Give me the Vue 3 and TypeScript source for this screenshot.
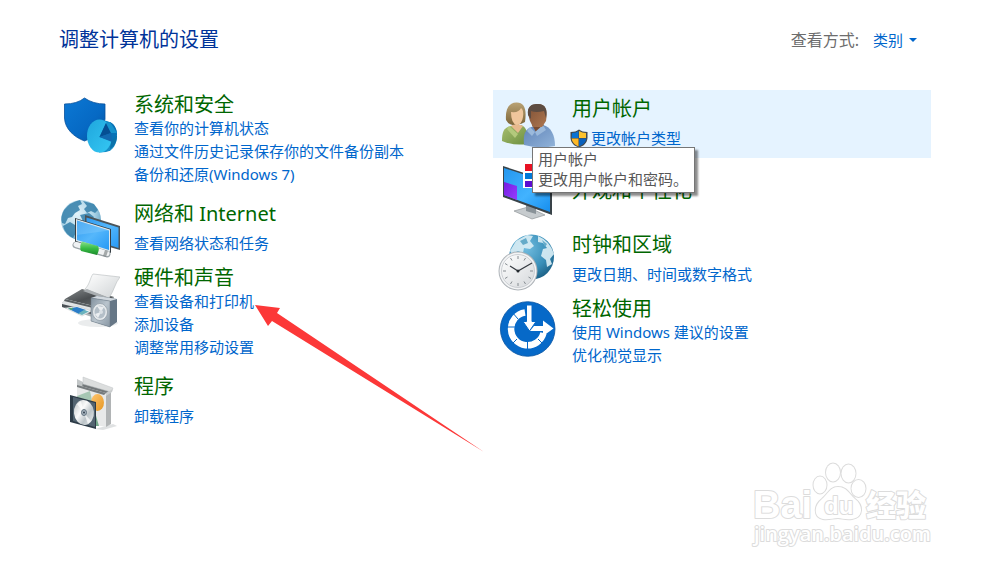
<script setup lang="ts">
interface Category {
  id: string
  title: string
  links: string[]
}

const systemCategories: Category[] = [
  { id: 'security', title: '系统和安全', links: ['查看你的计算机状态', '通过文件历史记录保存你的文件备份副本', '备份和还原(Windows 7)'] },
  { id: 'network', title: '网络和 Internet', links: ['查看网络状态和任务'] },
  { id: 'hardware', title: '硬件和声音', links: ['查看设备和打印机', '添加设备', '调整常用移动设置'] },
  { id: 'programs', title: '程序', links: ['卸载程序'] },
]

const personalCategories: Category[] = [
  { id: 'accounts', title: '用户帐户', links: ['更改帐户类型'] },
  { id: 'appearance', title: '外观和个性化', links: [] },
  { id: 'clock', title: '时钟和区域', links: ['更改日期、时间或数字格式'] },
  { id: 'access', title: '轻松使用', links: ['使用 Windows 建议的设置', '优化视觉显示'] },
]

const columns = [systemCategories, personalCategories]
</script>

<template>
  <main class="panel">
    <header class="bar">
      <h1 class="title">调整计算机的设置</h1>
      <div class="view">
        <span id="view-label" class="view-label">查看方式:</span>
        <button class="view-button" type="button" aria-labelledby="view-label view-value">
          <span id="view-value">类别</span>
          <svg class="caret" viewBox="0 0 8 4" aria-hidden="true"><path d="M0 0H8L4 4Z" fill="#0066cc" /></svg>
        </button>
      </div>
    </header>

    <div class="columns">
      <div v-for="(column, index) in columns" :key="index" class="column">
        <section v-for="item in column" :key="item.id" class="item" :class="[item.id, { single: item.links.length === 1 }]">
          <svg v-if="item.id === 'security'" class="icon" viewBox="0 0 60 60" aria-hidden="true">
            <defs>
              <linearGradient id="sec-shield" x1="0" y1="0" x2="1" y2="1"><stop offset="0" stop-color="#0b78d4" /><stop offset=".6" stop-color="#0669c4" /><stop offset="1" stop-color="#07509b" /></linearGradient>
              <linearGradient id="sec-disc" x1="0" y1="0" x2="1" y2="1"><stop offset="0" stop-color="#1fa6dd" /><stop offset="1" stop-color="#35c8f3" /></linearGradient>
            </defs>
            <path d="M4.500 8Q17 8 24.500 2Q33 8 45 8V23C44 34 35 41 24.500 45C14 41 5 33 4.500 22Z" fill="url(#sec-shield)" stroke="#07519c" stroke-width=".8" />
            <path d="M40 24L47 25C54 27 57 33 57 39C57 48 53 55 46 56L39 56.500Z" fill="#168dc6" />
            <path d="M50 53C55 50 57 45 57 40L52 38Z" fill="#0b72aa" />
            <ellipse cx="39.500" cy="40" rx="12.500" ry="16.500" fill="url(#sec-disc)" />
            <path d="M39.500 41L46 27L50 26C55 28 57 34 57 39L52 45Z" fill="#0872b6" />
            <path d="M39.500 41L46 27L51 37Z" fill="#054f93" />
            <path d="M39.500 41L51 37L52 46Z" fill="#1269b0" />
            <path d="M46 27L50 26L57 37L51 37Z" fill="#1593cd" />
          </svg>

          <svg v-else-if="item.id === 'network'" class="icon" viewBox="0 0 60 60" aria-hidden="true">
            <defs>
              <radialGradient id="net-globe" cx=".4" cy=".35" r=".7"><stop offset="0" stop-color="#e4f4fa" /><stop offset=".6" stop-color="#aed5e7" /><stop offset="1" stop-color="#5c9fc2" /></radialGradient>
              <linearGradient id="net-screen" x1="0" y1="0" x2="1" y2="1"><stop offset="0" stop-color="#2f9af0" /><stop offset=".5" stop-color="#55b7fb" /><stop offset="1" stop-color="#2699f5" /></linearGradient>
              <linearGradient id="net-green" x1="0" y1="0" x2="0" y2="1"><stop offset="0" stop-color="#8be08b" /><stop offset=".5" stop-color="#39bd46" /><stop offset="1" stop-color="#1c8b2b" /></linearGradient>
            </defs>
            <circle cx="21" cy="20" r="20" fill="url(#net-globe)" />
            <path d="M4 10Q10 2 20 0L22 4L18 6L20 10L15 13L12 17L8 18L5 24L2 23Q0 17 4 10ZM23 1L34 4L38 10L35 13L31 11L27 13L24 9L27 6ZM3 26L10 22L15 25L17 31L13 38Q5 34 3 26ZM20 15L29 13L34 17L30 24L23 21Z" fill="#347fa9" opacity=".85" />
            <path d="M25 15L60 26V50L25 40Z" fill="#4b5459" />
            <path d="M26.500 17.500L58.500 27.500V48L26.500 38Z" fill="url(#net-screen)" />
            <path d="M15 18L51 29V53L15 42Z" fill="#353e43" />
            <path d="M16 19L50 29.500V52L16 41Z" fill="#dfe7eb" />
            <path d="M17 20.500L49 30.500V50L17 40Z" fill="url(#net-screen)" />
            <path d="M17 20.500L49 30.500L17 35Z" fill="#8ccefc" opacity=".35" />
            <path d="M16 45L47 54" stroke="#9ca4a8" stroke-width="7" stroke-linecap="round" />
            <path d="M16 44.500L47 53.500" stroke="#f0f2f3" stroke-width="5" stroke-linecap="round" />
            <path d="M22 41.500L38 46Q40 49 37 55L21 51Q19 46 22 41.500Z" fill="url(#net-green)" />
            <path d="M45 50L48 51L46 57L43 56Z" fill="#73797b" opacity=".6" />
          </svg>

          <svg v-else-if="item.id === 'hardware'" class="icon" viewBox="0 0 60 60" aria-hidden="true">
            <defs>
              <linearGradient id="hw-paper" x1="0" y1="0" x2="1" y2="1"><stop offset="0" stop-color="#ffffff" /><stop offset="1" stop-color="#cfd3d5" /></linearGradient>
              <linearGradient id="hw-top" x1="0" y1="0" x2="1" y2="1"><stop offset="0" stop-color="#85898b" /><stop offset=".5" stop-color="#4b4f52" /><stop offset="1" stop-color="#6a6f72" /></linearGradient>
              <linearGradient id="hw-box" x1="0" y1="0" x2="1" y2="1"><stop offset="0" stop-color="#8493a0" /><stop offset=".5" stop-color="#b9c4cd" /><stop offset="1" stop-color="#8796a3" /></linearGradient>
            </defs>
            <ellipse cx="38" cy="54" rx="20" ry="4" fill="#adb3b6" opacity=".25" />
            <path d="M22 21L54 28V42L32 48L2 38V34L6 30Z" fill="#aeb4b7" />
            <path d="M22 20L54 28L34 37L5 30Z" fill="url(#hw-top)" />
            <path d="M25 20C30 15 30 9 33 5L60 8C55 14 54 22 49 29Z" fill="url(#hw-paper)" stroke="#b7bcbe" stroke-width=".6" />
            <path d="M27 20L49 29L45 30L23 22Z" fill="#a9aeb1" />
            <path d="M5 30L33 37V43L2 37V34Z" fill="#e1e4e5" />
            <path d="M5 30L33 37V39L4 32Z" fill="#5a6063" />
            <path d="M2 35L31 42V45L2 38Z" fill="#495055" />
            <path d="M5 39L17 37L32 42L22 47Z" fill="#f3f4f4" stroke="#b1b8bc" stroke-width=".4" />
            <path d="M8 39.500L17 38L26 41L19 45Z" fill="#2a7dc7" />
            <path d="M8 39.500L13 38.700L12 41Z" fill="#57ac69" />
            <path d="M18 44.500L24 41L29 42.500L22 46Z" fill="#6cb3bd" />
            <path d="M31 29L37 27L57 30V53L50 58L31 52Z" fill="#667786" />
            <path d="M31 29L37 27L57 30L50 32Z" fill="#d2d9df" />
            <path d="M31 29L50 32V58L31 52Z" fill="url(#hw-box)" stroke="#6c7a87" stroke-width=".5" />
            <ellipse cx="40" cy="43" rx="7.500" ry="8.500" fill="#e6eaed" stroke="#8c98a2" stroke-width=".7" />
            <ellipse cx="40" cy="43" rx="5.500" ry="6.500" fill="#b4bfc8" />
            <path d="M37 37L41 43L44 38ZM35 45L41 43L38 49Z" fill="#f9fafb" opacity=".8" />
            <circle cx="41" cy="43" r="2" fill="#dbe1e5" />
          </svg>

          <svg v-else-if="item.id === 'programs'" class="icon" viewBox="0 0 60 60" aria-hidden="true">
            <defs>
              <linearGradient id="prog-disc" x1="0" y1="0" x2="1" y2="1"><stop offset="0" stop-color="#b7bdc0" /><stop offset=".4" stop-color="#fafafa" /><stop offset=".65" stop-color="#bcc4c8" /><stop offset="1" stop-color="#f0f2f3" /></linearGradient>
              <linearGradient id="prog-orange" x1="0" y1="0" x2="1" y2="1"><stop offset="0" stop-color="#ffc56f" /><stop offset="1" stop-color="#e69722" /></linearGradient>
            </defs>
            <path d="M35 56L53 51L57 53L43 57Z" fill="#b7bdbf" opacity=".45" />
            <path d="M17 12L47 19V54L17 49Z" fill="#e8e9e9" />
            <path d="M46 19L51 16V51L46 54Z" fill="#b1b4b5" />
            <path d="M17 12L23 9L51 16L46 20Z" fill="#73787a" />
            <path d="M23 4L53 15L51 19L23 11Z" fill="#dcdede" stroke="#bec2c4" stroke-width=".5" />
            <path d="M17 6L23 9L22 15L17 12Z" fill="#c2c6c7" />
            <path d="M17 12L46 20L44 22L17 14Z" fill="#777c7e" />
            <path d="M46 20L53 16L52 19L46 23Z" fill="#c9cccd" />
            <path d="M17 23L30 18L33 32L18 27Z" fill="#a6c6b3" />
            <path d="M34 36L39 53L34 53Z" fill="#75a98b" />
            <ellipse cx="37.500" cy="29.500" rx="6.500" ry="8.500" fill="url(#prog-orange)" />
            <path d="M10 22L36 29V56L10 49Z" fill="#2d3b47" />
            <path d="M13 24L35 30V54L13 48Z" fill="#536471" />
            <ellipse cx="24" cy="39.500" rx="10" ry="12.500" fill="url(#prog-disc)" transform="rotate(-6 24 40)" />
            <path d="M24 40L17 31L21 28ZM24 40L31 48L28 51Z" fill="#ffffff" opacity=".7" />
            <ellipse cx="24" cy="39.500" rx="2.500" ry="3" fill="#a8b4be" stroke="#60717e" />
            <circle cx="24" cy="39.500" r="1" fill="#31404d" />
          </svg>

          <svg v-else-if="item.id === 'accounts'" class="icon" viewBox="0 0 60 60" aria-hidden="true">
            <defs>
              <linearGradient id="acc-green" x1="0" y1="0" x2="1" y2="1"><stop offset="0" stop-color="#a9bf70" /><stop offset="1" stop-color="#6c8f40" /></linearGradient>
              <linearGradient id="acc-blue" x1="0" y1="0" x2="1" y2="1"><stop offset="0" stop-color="#5f83b8" /><stop offset="1" stop-color="#91b3d9" /></linearGradient>
              <linearGradient id="acc-hair" x1="0" y1="0" x2="0" y2="1"><stop offset="0" stop-color="#b9a275" /><stop offset="1" stop-color="#7c6539" /></linearGradient>
              <linearGradient id="acc-face" x1="0" y1="0" x2="1" y2="1"><stop offset="0" stop-color="#7e5035" /><stop offset="1" stop-color="#ad7650" /></linearGradient>
            </defs>
            <path d="M4 46C4 36 6 33 13 31L23 30C29 32 30 39 29 49Q16 51 4 46Z" fill="url(#acc-green)" />
            <path d="M13 31L18 28L25 31L20 38Z" fill="#e7b98d" />
            <path d="M11 31L20 39L17 43L9 34Z" fill="#b3c97c" />
            <path d="M8 25C7 13 12 7 19 7.500C26 8 29 13 27 27Q22 30 18 29Q12 32 8 25Z" fill="url(#acc-hair)" />
            <path d="M13 17Q21 18 23 13Q26 15 25 22Q24 29 19 30Q13 29 13 17Z" fill="#efc69c" />
            <path d="M26 50C25 38 27 34 36 31L45 30C53 32 57 40 57 51Q41 54 26 50Z" fill="url(#acc-blue)" />
            <path d="M34 30L45 27L46 33L38 37Z" fill="#794b31" />
            <path d="M32 32L37 37L34 41L29 36ZM45 30L48 35L39 41L37 37Z" fill="#9bb9db" />
            <path d="M30 19C29 11 35 9 40 9C47 9 50 14 48 26L44 32L35 32L32 26Z" fill="url(#acc-face)" />
            <path d="M30 20C29 11 34 8.500 40 9C47 9 50 14 48 23L46 16Q38 18 33 16L33 24Z" fill="#5d4c42" />
          </svg>

          <svg v-else-if="item.id === 'appearance'" class="icon" viewBox="0 0 60 60" aria-hidden="true">
            <defs>
              <linearGradient id="app-screen" x1="0" y1="0" x2="1" y2="1"><stop offset="0" stop-color="#2496ee" /><stop offset=".55" stop-color="#42b3ff" /><stop offset="1" stop-color="#168eee" /></linearGradient>
              <linearGradient id="app-purple" x1="0" y1="0" x2="1" y2="1"><stop offset="0" stop-color="#731de0" /><stop offset="1" stop-color="#983cff" /></linearGradient>
            </defs>
            <path d="M16 51L30 47L47 55L34 59Z" fill="#c6cbce" stroke="#909799" stroke-width=".7" />
            <path d="M28 43L38 46V54L28 51Z" fill="#899298" />
            <path d="M5 6L54 22V55L5 37Z" fill="#394349" />
            <path d="M6 8L52 23V52L6 35Z" fill="url(#app-screen)" />
            <path d="M6 22L19 26V40L6 35Z" fill="url(#app-purple)" />
            <path d="M25 3H36V28H25Z" fill="#ffffff" />
            <path d="M27 4H34V11H27Z" fill="#e81123" />
            <path d="M27 13H34V19H27Z" fill="#0078d7" />
            <path d="M27 21H34V27H27Z" fill="#5c0bd0" />
          </svg>

          <svg v-else-if="item.id === 'clock'" class="icon" viewBox="0 0 60 60" aria-hidden="true">
            <defs>
              <radialGradient id="clk-globe" cx=".38" cy=".3" r=".75"><stop offset="0" stop-color="#72bde0" /><stop offset=".65" stop-color="#388eb8" /><stop offset="1" stop-color="#1b5f84" /></radialGradient>
              <linearGradient id="clk-face" x1="0" y1="0" x2="1" y2="1"><stop offset="0" stop-color="#ffffff" /><stop offset="1" stop-color="#d5d8db" /></linearGradient>
            </defs>
            <circle cx="33.500" cy="26" r="22.500" fill="url(#clk-globe)" />
            <path d="M18 10L29 4L35 5L32 10L36 15L32 18L26 17L25 22L20 20L14 23L12 20ZM40 5Q52 10 56 23L52 28L54 33L49 36L48 29L43 25L45 18L49 17L45 12L40 11Z" fill="#d8edf4" opacity=".92" />
            <path d="M22 10L28 7L30 12L25 14ZM44 9L49 13L47 16Z" fill="#65abc9" />
            <circle cx="20" cy="40" r="19.500" fill="#aeb3b8" />
            <circle cx="20" cy="40" r="18.500" fill="#f3f4f5" />
            <circle cx="20" cy="40" r="16.500" fill="url(#clk-face)" stroke="#c3c7cb" stroke-width=".8" />
            <path d="M20 25V28M20 52V55M5 40H8M32 40H35M12.500 27L14 29.500M27.500 27L26 29.500M7 32.500L9.500 34M7 47.500L9.500 46M33 47.500L30.500 46M12.500 53L14 50.500M27.500 53L26 50.500" stroke="#868c91" />
            <path d="M12 35L20 40L34 32" fill="none" stroke="#353a40" stroke-width="1.200" />
            <circle cx="20" cy="40" r="1.500" fill="#24292e" />
          </svg>

          <svg v-else class="icon" viewBox="0 0 60 60" aria-hidden="true">
            <circle cx="29.700" cy="31" r="27.300" fill="#0669c8" stroke="#0754a2" stroke-width=".8" />
            <path d="M27 14.500A16.500 16.500 0 1 0 45.500 35" fill="none" stroke="#ffffff" stroke-width="6.500" />
            <path d="M20 21L14 14M17 29H9M19 41L13 47M29.500 44V52M40 41L46 47" stroke="#0669c8" stroke-width="1" />
            <path d="M28.500 7H34V23.500H38L31.500 33L25 23.500H28.500Z" fill="#ffffff" stroke="#0669c8" />
            <path d="M36 28H45V22.500L55.500 30.500L45 38V33H32Z" fill="#ffffff" />
          </svg>

          <div class="text">
            <h2 class="heading"><a href="#">{{ item.title }}</a></h2>
            <ul v-if="item.links.length" class="links">
              <li v-for="link in item.links" :key="link">
                <svg v-if="item.id === 'accounts'" class="shield" viewBox="0 0 18 19" aria-hidden="true">
                  <path d="M.5 3Q6 3 9 .5Q12 3 17.500 3V9C17 14 14 17 9 18.500C4 17 1 14 .5 9Z" fill="#41484e" />
                  <path d="M2 4Q6 4 8.500 2V9H1.600Z" fill="#0b73d2" />
                  <path d="M9 2Q12 4 16 4V9H9Z" fill="#fdc22d" />
                  <path d="M1.600 9.500H8.500V17.500C4.500 16 2 13 1.600 9.500Z" fill="#fdb827" />
                  <path d="M9 9.500H16.400C16 13 13 16 9 17.500Z" fill="#0961bd" />
                </svg>
                <a href="#">{{ link }}</a>
              </li>
            </ul>
          </div>

          <div v-if="item.id === 'accounts'" class="tooltip" role="tooltip">用户帐户<br />更改用户帐户和密码。</div>
          <svg v-if="item.id === 'hardware'" class="pointer" viewBox="0 0 229 147" aria-hidden="true">
            <path d="M0 0L25 3L22 8L229 147L17 16L13 21Z" fill="#fc3838" />
          </svg>
        </section>
      </div>
    </div>

    <svg class="watermark" viewBox="0 0 190 90" role="img" aria-label="Baidu 经验 jingyan.baidu.com">
      <g class="mark">
        <text class="mark-latin" x="8" y="58">Bai</text>
        <ellipse cx="75" cy="25" rx="6.500" ry="8.500" />
        <ellipse cx="88" cy="12.500" rx="7" ry="9" />
        <ellipse cx="103.500" cy="13.500" rx="7" ry="9" />
        <ellipse cx="113.500" cy="28.500" rx="7" ry="8.500" />
        <path d="M93 27C102 27 104 34 110 39C118 45 119 57 107 59C100 60 97 58 93 58C88 58 84 60 78 59C68 57 69 45 77 39C83 34 85 27 93 27Z" />
        <text class="mark-du" x="79" y="54">du</text>
        <text class="mark-cjk" x="121" y="56">经验</text>
        <text class="mark-url" x="9" y="81">jingyan.baidu.com</text>
      </g>
    </svg>
  </main>
</template>

<style>
body {
  margin: 0;
  background: #ffffff;
}
</style>

<style scoped>
.panel {
  position: relative;
  box-sizing: border-box;
  min-height: 100vh;
  padding: 27px 51px 0 55px;
  font-family: "Noto Sans", "Noto Sans CJK SC", sans-serif;
  font-size: 15px;
  line-height: 23px;
  font-weight: 400;
}
.bar {
  display: flex;
  align-items: center;
  justify-content: space-between;
  padding: 0 14px 0 4px;
}
.title {
  margin: 0;
  font-size: 20px;
  line-height: 26px;
  font-weight: 400;
  color: #003399;
}
.view {
  display: flex;
  align-items: center;
  gap: 14px;
}
.view-label {
  font-size: 16px;
  color: #6d6d6d;
}
.view-button {
  display: flex;
  align-items: center;
  gap: 6px;
  padding: 0;
  border: 0;
  background: none;
  font: inherit;
  color: #0066cc;
}
.caret {
  width: 8px;
  height: 4px;
}
.columns {
  display: grid;
  grid-template-columns: 1fr 1fr;
  padding-top: 37px;
}
.column:first-child {
  padding-top: 1px;
}
.item {
  position: relative;
  display: flex;
  align-items: flex-start;
  gap: 14px;
  margin-bottom: 14px;
  padding-left: 5px;
}
.item.single {
  margin-bottom: 4px;
}
.icon {
  flex: none;
  width: 60px;
  height: 60px;
  margin-top: 5px;
}
.single .icon,
.appearance .icon {
  margin-top: 0;
}
.access .icon {
  margin-top: 3px;
}
.heading {
  margin: 0;
  padding-top: 1px;
  margin-bottom: -1px;
  font-size: 20px;
  line-height: 26px;
  font-weight: 400;
}
.heading a {
  color: #006600;
}
a {
  color: #0066cc;
  text-decoration: none;
}
.links {
  margin: 0;
  padding: 0;
  list-style: none;
}
.links li {
  display: flex;
  align-items: center;
  gap: 3px;
}
.single .links {
  margin-top: 6px;
}
.accounts {
  z-index: 1;
  padding-top: 5px;
  padding-bottom: 3px;
  background: #e5f3ff;
}
.accounts .links {
  margin-left: -2px;
}
.item.accounts {
  margin-bottom: 2px;
}
.item.appearance {
  align-items: center;
  margin-bottom: 11px;
}
.shield {
  width: 18px;
  height: 19px;
}
.tooltip {
  position: absolute;
  top: 57px;
  left: 39px;
  padding: 1px 6px 3px 5px;
  border: 1px solid #767676;
  background: #ffffff;
  box-shadow: 3px 3px 2px rgba(0, 0, 0, 0.45);
  line-height: 20px;
  color: #575757;
  white-space: nowrap;
}
.pointer {
  position: absolute;
  top: 41px;
  left: 200px;
  width: 229px;
  height: 147px;
}
.watermark {
  position: absolute;
  right: 47px;
  bottom: 19px;
  width: 190px;
  height: 90px;
}
.mark {
  fill: #ffffff;
  stroke: #dcdcdc;
  stroke-width: 2px;
  stroke-linejoin: round;
  paint-order: stroke;
}
.mark-latin {
  font: 700 38px "Liberation Sans", sans-serif;
}
.mark-du {
  font: 700 24px "Liberation Sans", sans-serif;
}
.mark-cjk {
  font: 900 30px "Noto Sans CJK SC", sans-serif;
}
.mark-url {
  font: 600 20px "Open Sans", sans-serif;
}
</style>
